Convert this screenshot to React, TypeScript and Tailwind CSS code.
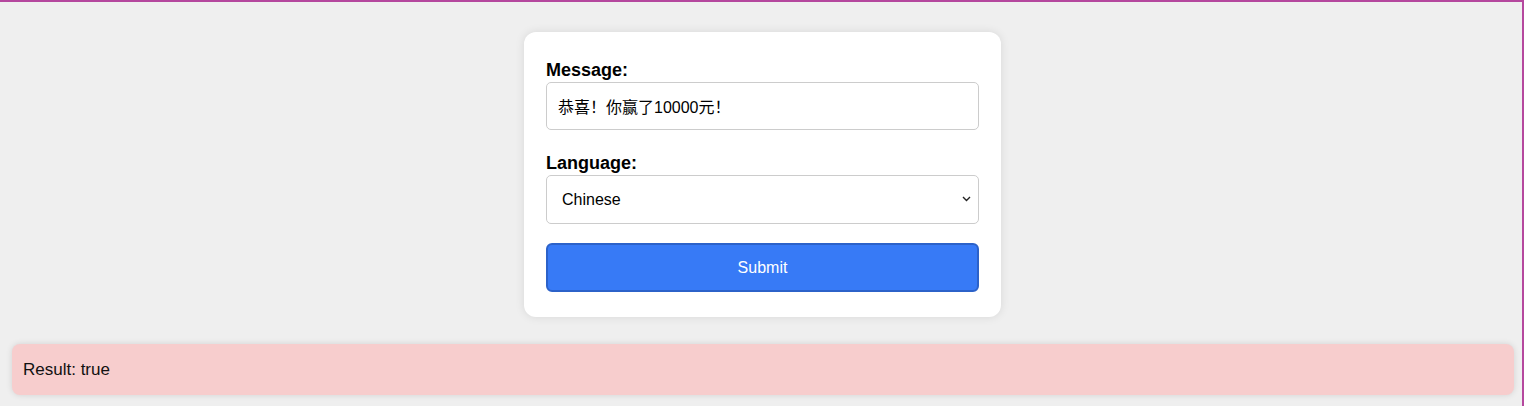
import { useState } from "react";

export default function App() {
  const [message, setMessage] = useState("恭喜！你赢了10000元！");
  const [language, setLanguage] = useState("Chinese");

  return (
    <div
      className="min-h-[406px] bg-[#efefef] border-t-2 border-r-2 border-[#b5489e] pt-[30px] pb-[12px]"
      style={{ fontFamily: '"Liberation Sans", Arial, "Noto Sans CJK SC", sans-serif' }}
    >
      <div className="pl-[3px]">
        <div className="mx-auto w-[477px] rounded-[12px] bg-white px-[22px] pt-[27px] pb-[25px] shadow-[0_0_10px_rgba(0,0,0,0.1)]">
          <form className="flex flex-col" onSubmit={(e) => e.preventDefault()}>
            <label className="text-[18px] font-bold leading-[22px] text-black">Message:</label>
            <input
              value={message}
              onChange={(e) => setMessage(e.target.value)}
              className="mt-[1px] h-[48px] w-full rounded-[5px] border border-[#cccccc] px-[11px] text-[16px] text-black outline-none"
            />

            <label className="mt-[22px] text-[18px] font-bold leading-[22px] text-black">Language:</label>
            <div className="relative mt-[1px]">
              <select
                value={language}
                onChange={(e) => setLanguage(e.target.value)}
                className="h-[49px] w-full appearance-none rounded-[5px] border border-[#cccccc] bg-white px-[15px] text-[16px] text-black outline-none"
              >
                <option>Chinese</option>
                <option>English</option>
                <option>Spanish</option>
              </select>
              <svg
                className="pointer-events-none absolute right-[8px] top-[21px]"
                width="9"
                height="6"
                viewBox="0 0 9 6"
                fill="none"
              >
                <path d="M1 1l3.5 3.5L8 1" stroke="#222" strokeWidth="1.4" />
              </svg>
            </div>

            <button
              type="submit"
              className="mt-[19px] h-[49px] w-full rounded-[6px] border-2 border-[#2c62c9] bg-[#377af6] text-[16px] text-white"
            >
              Submit
            </button>
          </form>
        </div>
      </div>

      <div className="ml-[12px] mr-[8px] mt-[27px] flex h-[51px] items-center rounded-[8px] bg-[#f7cdcd] px-[11px] text-[17px] text-[#111] shadow-[0_0_6px_rgba(0,0,0,0.12)]">
        Result: {String(true)}
      </div>
    </div>
  );
}
